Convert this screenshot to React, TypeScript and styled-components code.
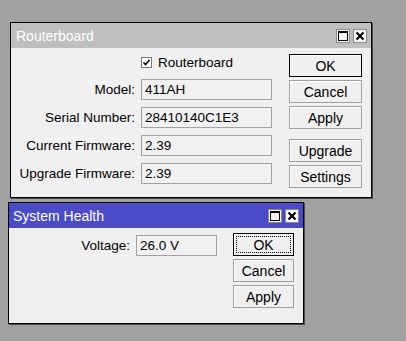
import React from 'react';
import styled, { createGlobalStyle } from 'styled-components';

const GlobalStyle = createGlobalStyle`
  html, body {
    margin: 0;
    padding: 0;
    background: #a1a1a1;
  }
  body {
    font-family: "Liberation Sans", Arial, sans-serif;
    font-size: 13.5px;
    color: #000;
  }
`;

const Desktop = styled.div`
  position: relative;
  width: 406px;
  height: 341px;
  overflow: hidden;
  background: #a1a1a1;
`;

// windows sit on a free desktop, so their place is part of the picture
const Window = styled.div<{ $x: number; $y: number; $w: number }>`
  position: absolute;
  left: ${(p) => p.$x}px;
  top: ${(p) => p.$y}px;
  width: ${(p) => p.$w}px;
  box-sizing: border-box;
  background: #f0f0f0;
  border: 1px solid #000;
  box-shadow: 1px 1px 0 #4a4a4a;
`;

const TitleBar = styled.div<{ $active?: boolean }>`
  display: flex;
  align-items: center;
  justify-content: space-between;
  height: 25px;
  padding: 0 4px 0 ${(p) => (p.$active ? 4 : 5)}px;
  background: ${(p) => (p.$active ? '#4b4bc7' : '#bfbfbf')};
  color: #fff;
  font-size: 14px;
`;

const TitleButtons = styled.div`
  display: flex;
  gap: 3px;
`;

const TitleBtn = styled.div`
  width: 14px;
  height: 14px;
  box-sizing: border-box;
  border: 1px solid #8a8a8a;
  background: #f4f4f4;
  display: flex;
  align-items: center;
  justify-content: center;
`;

const Body = styled.div<{ $pad: string }>`
  display: flex;
  align-items: flex-start;
  padding: ${(p) => p.$pad};
`;

const Form = styled.div<{ $w: number }>`
  width: ${(p) => p.$w}px;
  display: flex;
  flex-direction: column;
  gap: 6px;
`;

const CheckRow = styled.label<{ $indent: number }>`
  display: flex;
  align-items: center;
  gap: 6px;
  height: 17px;
  margin-bottom: 1px;
  padding-left: ${(p) => p.$indent}px;
`;

const CheckBox = styled.span`
  width: 11px;
  height: 11px;
  box-sizing: border-box;
  border: 1px solid #7a7a7a;
  background: #fff;
  display: flex;
  align-items: center;
  justify-content: center;
`;

const FieldRow = styled.div`
  display: flex;
  align-items: center;
  gap: 6px;
  height: 22px;
`;

const Label = styled.span<{ $w: number }>`
  width: ${(p) => p.$w}px;
  text-align: right;
  white-space: nowrap;
`;

const Field = styled.div<{ $w: number }>`
  width: ${(p) => p.$w}px;
  height: 21px;
  box-sizing: border-box;
  border: 1px solid #a2a2a2;
  background: #f1f1f1;
  padding: 0 3px;
  line-height: 19px;
  white-space: nowrap;
  overflow: hidden;
`;

const ButtonCol = styled.div<{ $ml: number; $w: number }>`
  margin-left: ${(p) => p.$ml}px;
  width: ${(p) => p.$w}px;
  display: flex;
  flex-direction: column;
  gap: 3px;
`;

const Button = styled.div<{ $default?: boolean; $focus?: boolean; $space?: number }>`
  position: relative;
  height: 23px;
  box-sizing: border-box;
  margin-top: ${(p) => p.$space ?? 0}px;
  border: 1px solid ${(p) => (p.$default ? '#000' : '#a0a0a0')};
  background: #f0f0f0;
  box-shadow: inset 1px 1px 0 #fff;
  display: flex;
  align-items: center;
  justify-content: center;
  font-size: 14px;

  &::after {
    content: '';
    display: ${(p) => (p.$focus ? 'block' : 'none')};
    position: absolute;
    inset: 2px;
    border: 1px dotted #000;
  }
`;

const MaxIcon = () => (
  <svg width="10" height="10" viewBox="0 0 10 10">
    <rect x="0.5" y="0.5" width="9" height="9" fill="none" stroke="#000" />
    <rect x="0.5" y="0.5" width="9" height="1.5" fill="#000" />
  </svg>
);

const CloseIcon = () => (
  <svg width="10" height="10" viewBox="0 0 10 10">
    <path d="M1.5 1.5 L8.5 8.5 M8.5 1.5 L1.5 8.5" stroke="#000" strokeWidth="2" />
  </svg>
);

const CheckMark = () => (
  <svg width="9" height="9" viewBox="0 0 9 9">
    <path d="M1.5 4.5 L3.5 6.5 L7.5 2" fill="none" stroke="#000" strokeWidth="1.6" />
  </svg>
);

const WindowTitle = ({ title, active }: { title: string; active?: boolean }) => (
  <TitleBar $active={active}>
    <span>{title}</span>
    <TitleButtons>
      <TitleBtn><MaxIcon /></TitleBtn>
      <TitleBtn><CloseIcon /></TitleBtn>
    </TitleButtons>
  </TitleBar>
);

const boardFields = [
  { label: 'Model:', value: '411AH' },
  { label: 'Serial Number:', value: '28410140C1E3' },
  { label: 'Current Firmware:', value: '2.39' },
  { label: 'Upgrade Firmware:', value: '2.39' },
];

export default function App() {
  return (
    <>
      <GlobalStyle />
      <Desktop>
        <Window $x={10} $y={22} $w={362}>
          <WindowTitle title="Routerboard" />
          <Body $pad="6px 8px 9px 0">
            <Form $w={261}>
              <CheckRow $indent={130}>
                <CheckBox><CheckMark /></CheckBox>
                <span>Routerboard</span>
              </CheckRow>
              {boardFields.map((f) => (
                <FieldRow key={f.label}>
                  <Label $w={124}>{f.label}</Label>
                  <Field $w={131}>{f.value}</Field>
                </FieldRow>
              ))}
            </Form>
            <ButtonCol $ml={17} $w={73}>
              <Button $default>OK</Button>
              <Button>Cancel</Button>
              <Button>Apply</Button>
              <Button $space={7}>Upgrade</Button>
              <Button>Settings</Button>
            </ButtonCol>
          </Body>
        </Window>

        <Window $x={8} $y={202} $w={296}>
          <WindowTitle title="System Health" active />
          <Body $pad="5px 9px 15px 0">
            <Form $w={208}>
              <FieldRow style={{ marginTop: 1 }}>
                <Label $w={121}>Voltage:</Label>
                <Field $w={81}>26.0 V</Field>
              </FieldRow>
            </Form>
            <ButtonCol $ml={16} $w={61}>
              <Button $default $focus>OK</Button>
              <Button>Cancel</Button>
              <Button>Apply</Button>
            </ButtonCol>
          </Body>
        </Window>
      </Desktop>
    </>
  );
}
